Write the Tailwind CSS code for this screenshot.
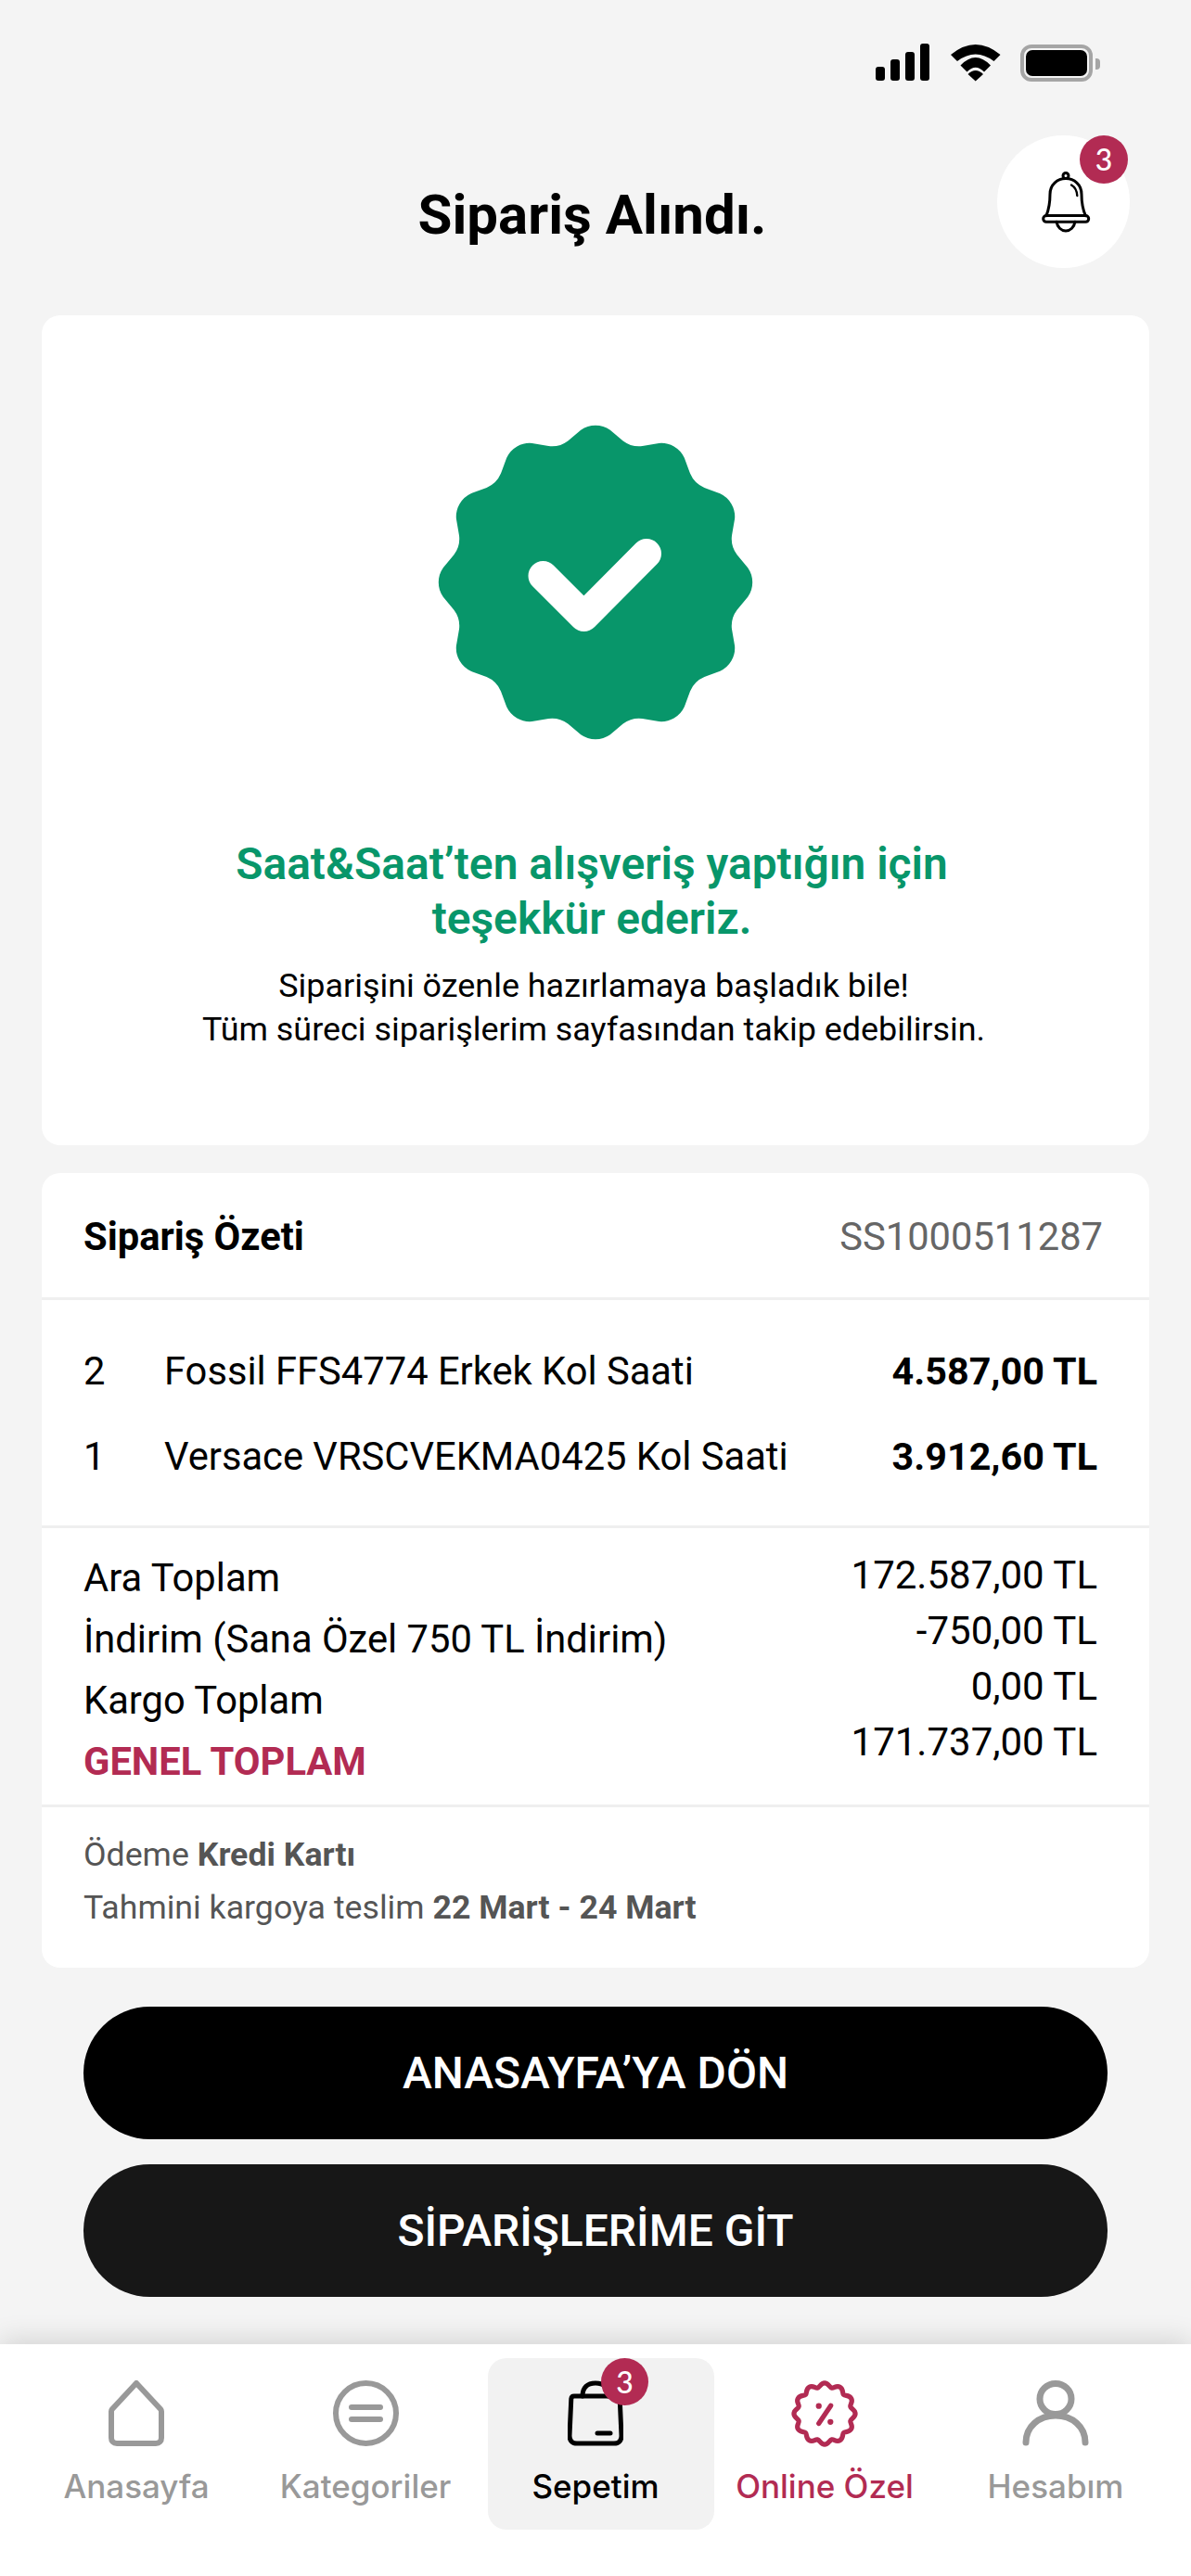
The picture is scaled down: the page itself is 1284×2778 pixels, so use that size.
<!DOCTYPE html>
<html lang="tr">
<head>
<meta charset="utf-8">
<script src="https://cdn.jsdelivr.net/npm/@tailwindcss/browser@4"></script>
<title>Sipariş Alındı</title>
</head>
<body class="m-0">
<div class="w-[1284px] h-[2778px] bg-[#f4f4f4] flex flex-col overflow-hidden font-['Roboto',sans-serif] text-black">

  <!-- status bar -->
  <div class="h-[146px] shrink-0 pt-[47px] pl-[944px] flex items-start">
    <div class="flex items-end gap-[6px] h-[40px] w-[60px]">
      <div class="w-[10px] h-[15px] bg-black rounded-[3px]"></div>
      <div class="w-[10px] h-[23px] bg-black rounded-[3px]"></div>
      <div class="w-[10px] h-[31px] bg-black rounded-[3px]"></div>
      <div class="w-[10px] h-[40px] bg-black rounded-[3px]"></div>
    </div>
    <svg class="ml-[21px] mt-[1px] shrink-0" width="54" height="40" viewBox="0 0 54 40" fill="#000">
      <path d="M0 11Q26.7 -11 53.5 11L46.5 18Q26.7 3 7 18Z"/>
      <path d="M10.5 22.5Q26.7 5.5 43 22.5L36 29.5Q26.7 20 17.5 29.5Z"/>
      <path d="M18.5 32Q26.7 24 35 32L26.7 39.5Z"/>
    </svg>
    <div class="ml-[21px] mt-[1px] w-[78px] h-[40px] border-[4px] border-[#a5a5a5] rounded-[12px] p-[2px] shrink-0">
      <div class="w-full h-full bg-black rounded-[7px]"></div>
    </div>
    <div class="ml-[3px] mt-[16px] w-[5px] h-[12px] bg-[#a5a5a5] rounded-r-[4px] shrink-0"></div>
  </div>

  <!-- header -->
  <div class="relative h-[194px] shrink-0">
    <h1 class="absolute left-0 top-[50px] w-[1277px] text-center text-[60px] leading-[72px] font-bold">Sipariş Alındı.</h1>
    <div class="absolute left-[1075px] top-0 w-[143px] h-[143px] bg-white rounded-full">
      <svg class="absolute left-[48px] top-[39px]" width="54" height="66" viewBox="0 0 54 66" fill="none" stroke="#000" stroke-width="3" stroke-linecap="round" stroke-linejoin="round">
        <circle cx="26" cy="4.5" r="3"/>
        <path d="M5 47.6C8 40 9 32 9 24.5C9 14 17 7.5 26 7.5C35 7.5 43 14 43 24.5C43 32 44 40 47.3 47.6"/>
        <rect x="1.7" y="47.6" width="49" height="6.7" rx="3.3"/>
        <path d="M16 54.3C17 60 21 64 26 64C31 64 35 60 36 54.3"/>
        <path d="M32 14.5C35.5 16.5 38 21 38.3 26" stroke-width="2.4"/>
      </svg>
      <div class="absolute left-[89px] top-0 w-[52px] h-[52px] rounded-full bg-[#b22b53] text-white flex items-center justify-center text-[32px] leading-none font-['Lato',sans-serif] font-medium">3</div>
    </div>
  </div>

  <!-- success card -->
  <section class="mx-[45px] h-[895px] shrink-0 bg-white rounded-[20px] flex flex-col items-center pt-[116px]">
    <svg width="344" height="344" viewBox="-172 -172 344 344">
      <path fill="#08966a" d="M-15.8,-164.2A27.5 27.5 0 0 1 15.8,-164.2L29.7,-152.6A28.8 28.8 0 0 0 50.6,-147L68.4,-150.1A27.5 27.5 0 0 1 95.8,-134.3L102,-117.4A28.8 28.8 0 0 0 117.4,-102L134.3,-95.8A27.5 27.5 0 0 1 150.1,-68.4L147,-50.6A28.8 28.8 0 0 0 152.6,-29.7L164.2,-15.8A27.5 27.5 0 0 1 164.2,15.8L152.6,29.7A28.8 28.8 0 0 0 147,50.6L150.1,68.4A27.5 27.5 0 0 1 134.3,95.8L117.4,102A28.8 28.8 0 0 0 102,117.4L95.8,134.3A27.5 27.5 0 0 1 68.4,150.1L50.6,147A28.8 28.8 0 0 0 29.7,152.6L15.8,164.2A27.5 27.5 0 0 1 -15.8,164.2L-29.7,152.6A28.8 28.8 0 0 0 -50.6,147L-68.4,150.1A27.5 27.5 0 0 1 -95.8,134.3L-102,117.4A28.8 28.8 0 0 0 -117.4,102L-134.3,95.8A27.5 27.5 0 0 1 -150.1,68.4L-147,50.6A28.8 28.8 0 0 0 -152.6,29.7L-164.2,15.8A27.5 27.5 0 0 1 -164.2,-15.8L-152.6,-29.7A28.8 28.8 0 0 0 -147,-50.6L-150.1,-68.4A27.5 27.5 0 0 1 -134.3,-95.8L-117.4,-102A28.8 28.8 0 0 0 -102,-117.4L-95.8,-134.3A27.5 27.5 0 0 1 -68.4,-150.1L-50.6,-147A28.8 28.8 0 0 0 -29.7,-152.6Z"/>
      <path d="M-56.5 -7L-12.5 37L55 -31" fill="none" stroke="#fff" stroke-width="32" stroke-linecap="round" stroke-linejoin="round"/>
    </svg>
    <h2 class="mt-[103px] pr-[8px] text-center text-[#08966a] text-[47.900px] leading-[59px] font-semibold">Saat&amp;Saat’ten alışveriş yaptığın için<br>teşekkür ederiz.</h2>
    <p class="mt-[19px] pr-[4px] text-center text-[35.900px] leading-[47px]">Siparişini özenle hazırlamaya başladık bile!<br>Tüm süreci siparişlerim sayfasından takip edebilirsin.</p>
  </section>

  <!-- summary card -->
  <section class="mx-[45px] mt-[30px] h-[857px] shrink-0 bg-white rounded-[20px] flex flex-col">
    <div class="h-[137px] shrink-0 border-b-[3px] border-[#efefef] pl-[45px] pr-[50px] flex items-center justify-between pt-[5px]">
      <span class="text-[41.700px] font-bold">Sipariş Özeti</span>
      <span class="text-[41.700px] text-[#666666]">SS1000511287</span>
    </div>
    <div class="h-[246px] shrink-0 border-b-[3px] border-[#efefef] pl-[45px] pr-[56px] pt-[31px] text-[41.700px] leading-[92px]">
      <div class="flex h-[92px]"><span class="w-[87px]">2</span><span class="flex-1">Fossil FFS4774 Erkek Kol Saati</span><span class="font-bold text-[41.300px]">4.587,00 TL</span></div>
      <div class="flex h-[92px]"><span class="w-[87px]">1</span><span class="flex-1">Versace VRSCVEKMA0425 Kol Saati</span><span class="font-bold text-[41.300px]">3.912,60 TL</span></div>
    </div>
    <div class="h-[301px] shrink-0 border-b-[3px] border-[#efefef] pl-[45px] pr-[56px] pt-[21px] flex justify-between text-[41.700px]">
      <div class="leading-[66px]">
        <div>Ara Toplam</div>
        <div>İndirim (Sana Özel 750 TL İndirim)</div>
        <div>Kargo Toplam</div>
        <div class="font-bold text-[#b22b53]">GENEL TOPLAM</div>
      </div>
      <div class="leading-[60px] text-right">
        <div class="text-[42px]">172.587,00 TL</div>
        <div class="text-[42px]">-750,00 TL</div>
        <div class="text-[42px]">0,00 TL</div>
        <div class="text-[42px]">171.737,00 TL</div>
      </div>
    </div>
    <div class="pl-[45px] pt-[23px] text-[35.700px] leading-[57px] text-[#555555]">
      <div>Ödeme <b class="font-bold">Kredi Kartı</b></div>
      <div>Tahmini kargoya teslim <b class="font-bold">22 Mart - 24 Mart</b></div>
    </div>
  </section>

  <!-- buttons -->
  <div class="mx-[90px] mt-[42px] flex flex-col gap-[27px] shrink-0">
    <button class="h-[143px] rounded-full bg-black text-white text-[48px] font-medium">ANASAYFA’YA DÖN</button>
    <button class="h-[143px] rounded-full bg-[#171717] text-white text-[48px] font-medium">SİPARİŞLERİME GİT</button>
  </div>

  <!-- bottom nav -->
  <nav class="mt-auto h-[250px] shrink-0 bg-white shadow-[0_-4px_28px_rgba(0,0,0,0.14)] pl-[24px] pt-[15px] flex items-start font-['Inter',sans-serif] text-[35px] leading-[40px] font-medium">
    <a class="w-[246px] h-[185px] flex flex-col items-center pt-[24px] text-[#999999]">
      <svg width="60" height="71" viewBox="0 0 60 71" fill="none" stroke="currentColor" stroke-width="6" stroke-linejoin="round"><path d="M30 3L4 31C3.4 31.700 3 32.500 3 33.500V62C3 65.500 5 68 9 68H51C55 68 57 65.500 57 62V33.500C57 32.500 56.600 31.700 56 31Z"/></svg>
      <span class="mt-[23px]">Anasayfa</span>
    </a>
    <a class="w-[248px] h-[185px] flex flex-col items-center pt-[24px] text-[#999999]">
      <svg width="71" height="71" viewBox="0 0 71 71" fill="none" stroke="currentColor" stroke-width="6" stroke-linecap="round"><circle cx="35.500" cy="35.500" r="32.500"/><path d="M20 29H51M20 42H51"/></svg>
      <span class="mt-[23px]">Kategoriler</span>
    </a>
    <a class="relative ml-[8px] w-[244px] h-[185px] pr-[12px] flex flex-col items-center pt-[24px] bg-[#f2f2f2] rounded-[20px] text-black">
      <svg width="60" height="71" viewBox="0 0 60 71" fill="none" stroke="currentColor" stroke-width="5" stroke-linecap="round" stroke-linejoin="round"><path d="M7 17H53C55 17 56 18 56.200 20L58 60C58 65 55 68 50 68H10C5 68 2 65 2 60L3.800 20C4 18 5 17 7 17Z"/><path d="M16 17C16 8 21 3 30 3C39 3 44 8 44 17"/><path d="M32 57H46"/></svg>
      <span class="mt-[23px]">Sepetim</span>
      <div class="absolute left-[122px] top-0 w-[51px] h-[51px] rounded-full bg-[#b22b53] text-white flex items-center justify-center text-[32px] leading-none font-['Lato',sans-serif]">3</div>
    </a>
    <a class="w-[238px] h-[185px] flex flex-col items-center pt-[24px] text-[#b22b53]">
      <svg width="72" height="72" viewBox="-172 -172 344 344" fill="none" stroke="currentColor" stroke-linecap="round" stroke-linejoin="round">
        <path stroke-width="25" d="M0,-158C20,-158 24,-136 37,-133C49,-130 60,-148 79,-137C98,-126 90,-106 98,-98C106,-90 126,-98 137,-79C148,-60 130,-49 133,-37C136,-24 158,-20 158,0C158,20 136,24 133,37C130,49 148,60 137,79C126,98 106,90 98,98C90,106 98,126 79,137C60,148 49,130 37,133C24,136 20,158 0,158C-20,158 -24,136 -37,133C-49,130 -60,148 -79,137C-98,126 -90,106 -98,98C-106,90 -126,98 -137,79C-148,60 -130,49 -133,37C-136,24 -158,20 -158,0C-158,-20 -136,-24 -133,-37C-130,-49 -148,-60 -137,-79C-126,-98 -106,-90 -98,-98C-90,-106 -98,-126 -79,-137C-60,-148 -49,-130 -37,-133C-24,-136 -20,-158 0,-158Z"/>
        <path stroke-width="25" d="M32 -42L-30 50"/>
        <circle cx="-30" cy="-40" r="15" fill="currentColor" stroke="none"/>
        <circle cx="30" cy="42" r="15" fill="currentColor" stroke="none"/>
      </svg>
      <span class="mt-[22px]">Online Özel</span>
    </a>
    <a class="w-[260px] h-[185px] flex flex-col items-center pt-[24px] text-[#999999]">
      <svg width="72" height="71" viewBox="0 0 72 71" fill="none" stroke="currentColor" stroke-width="7" stroke-linecap="round"><ellipse cx="36" cy="20" rx="17" ry="16.500"/><path d="M4 67C4 50 18 38 36 38C54 38 68 50 68 67"/></svg>
      <span class="mt-[23px]">Hesabım</span>
    </a>
  </nav>
</div>
</body>
</html>
